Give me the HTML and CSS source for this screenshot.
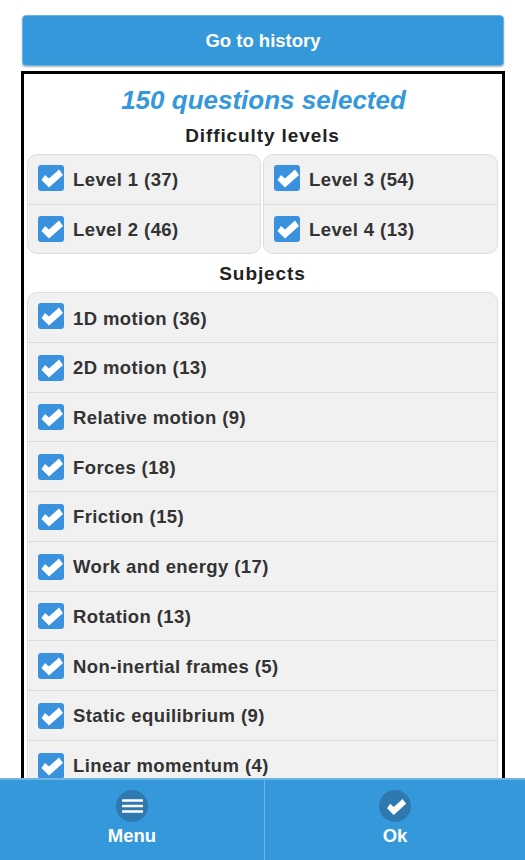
FILE: index.html
```html
<!DOCTYPE html>
<html lang="en">
<head>
    <meta charset="UTF-8">
    <meta name="viewport" content="width=device-width, initial-scale=1.0">
    <title>Question selection</title>
    <link rel="stylesheet" href="styles.css">
</head>
<body>
    <svg class="icon-defs" width="0" height="0">
        <symbol id="check" viewBox="0 0 26 26">
            <path d="M3.5 15 L7 10 L11 13.5 L21 4.5 L25 10 L11 22.5 Z" fill="#fff"/>
        </symbol>
    </svg>

    <div class="page">
        <button class="history-button">Go to history</button>

        <div class="panel">
            <h1>150 questions selected</h1>

            <h2>Difficulty levels</h2>
            <div class="levels">
                <div class="group">
                    <div class="row"><span class="box"><svg><use href="#check"/></svg></span>Level 1 (37)</div>
                    <div class="row"><span class="box"><svg><use href="#check"/></svg></span>Level 2 (46)</div>
                </div>
                <div class="group">
                    <div class="row"><span class="box"><svg><use href="#check"/></svg></span>Level 3 (54)</div>
                    <div class="row"><span class="box"><svg><use href="#check"/></svg></span>Level 4 (13)</div>
                </div>
            </div>

            <h2>Subjects</h2>
            <div class="group">
                <div class="row"><span class="box"><svg><use href="#check"/></svg></span>1D motion (36)</div>
                <div class="row"><span class="box"><svg><use href="#check"/></svg></span>2D motion (13)</div>
                <div class="row"><span class="box"><svg><use href="#check"/></svg></span>Relative motion (9)</div>
                <div class="row"><span class="box"><svg><use href="#check"/></svg></span>Forces (18)</div>
                <div class="row"><span class="box"><svg><use href="#check"/></svg></span>Friction (15)</div>
                <div class="row"><span class="box"><svg><use href="#check"/></svg></span>Work and energy (17)</div>
                <div class="row"><span class="box"><svg><use href="#check"/></svg></span>Rotation (13)</div>
                <div class="row"><span class="box"><svg><use href="#check"/></svg></span>Non-inertial frames (5)</div>
                <div class="row"><span class="box"><svg><use href="#check"/></svg></span>Static equilibrium (9)</div>
                <div class="row"><span class="box"><svg><use href="#check"/></svg></span>Linear momentum (4)</div>
            </div>
        </div>
    </div>

    <div class="footer">
        <button class="footer-button">
            <span class="circle">
                <svg width="21" height="14" viewBox="0 0 21 14"><path d="M1 1.5H20M1 7H20M1 12.5H20" stroke="#fff" stroke-width="2.6" stroke-linecap="round"/></svg>
            </span>
            Menu
        </button>
        <button class="footer-button">
            <span class="circle"><svg class="circle-check"><use href="#check"/></svg></span>
            Ok
        </button>
    </div>
</body>
</html>
```

FILE: styles.css
```css
* {
    box-sizing: border-box;
    font-family: "Liberation Sans", Arial, sans-serif;
}

html, body {
    height: 100%;
}

body {
    margin: 0;
    background-color: #fff;
    overflow: hidden;
}

.icon-defs {
    position: absolute;
}

.page {
    padding: 15px 20px 0 21px;
}

.history-button {
    display: block;
    width: 482px;
    height: 51px;
    margin: 0 0 5px 1px;
    background-color: #3498db;
    color: #fff;
    font-size: 18.5px;
    font-weight: bold;
    border: 1px solid #6fb5e4;
    border-radius: 4px;
    box-shadow: 0 1px 2px rgba(0,0,0,0.3);
}

.panel {
    width: 484px;
    border: 3px solid #000;
    padding: 0 4px 10px 3px;
}

h1 {
    margin: 10px 0 0 0;
    padding-left: 2px;
    height: 32px;
    line-height: 32px;
    font-size: 26px;
    font-weight: bold;
    font-style: italic;
    text-align: center;
    color: #3498db;
}

h2 {
    margin: 0;
    height: 38px;
    line-height: 40px;
    font-size: 19px;
    font-weight: bold;
    text-align: center;
    color: #222;
    letter-spacing: 0.9px;
}

.levels {
    display: grid;
    grid-template-columns: 234px 1fr;
    gap: 2px;
}

.group {
    background-color: #f1f1f1;
    border: 1px solid #ddd;
    border-radius: 10px;
}

.row {
    display: flex;
    align-items: center;
    height: 49.75px;
    padding: 2px 0 0 10px;
    font-size: 18.5px;
    font-weight: bold;
    color: #333;
    letter-spacing: 0.4px;
    border-top: 1px solid #ddd;
}

.row:first-child {
    height: 48.5px;
    border-top: none;
}

.box {
    display: flex;
    flex: none;
    width: 26px;
    height: 26px;
    margin: 0 9px 1px 0;
    background-color: #3a92de;
    border-radius: 3px;
}

.row:first-child .box {
    margin-bottom: 5px;
}

.box svg {
    width: 26px;
    height: 26px;
}

.footer {
    position: fixed;
    left: 0;
    right: 0;
    bottom: 0;
    height: 82px;
    display: flex;
    background-color: #3498db;
    border-top: 2px solid #6fb5e4;
}

.footer-button {
    flex: 1;
    display: flex;
    flex-direction: column;
    align-items: center;
    padding: 10px 0 0 0;
    background: none;
    border: none;
    color: #fff;
    font-size: 18.5px;
    font-weight: bold;
}

.footer-button:first-child {
    flex: 0 0 265px;
    border-right: 1px solid #6fb5e4;
}

.circle {
    display: flex;
    align-items: center;
    justify-content: center;
    width: 32px;
    height: 32px;
    margin-bottom: 3px;
    background-color: #2f78b0;
    border-radius: 50%;
}

.circle-check {
    width: 23px;
    height: 23px;
}
```
